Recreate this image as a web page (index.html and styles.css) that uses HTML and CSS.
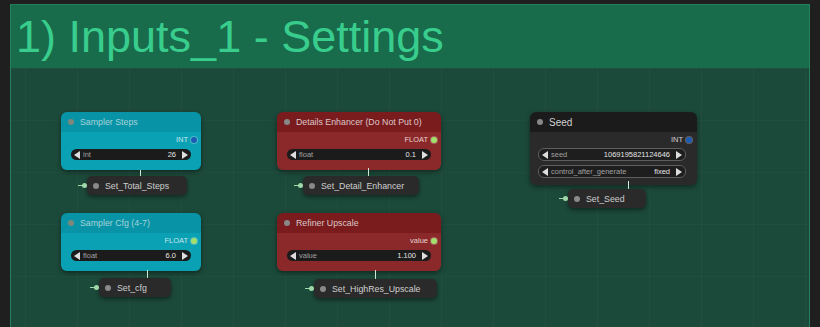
FILE: index.html
```html
<!DOCTYPE html>
<html lang="en">
<head>
  <meta charset="UTF-8" />
  <title>Inputs_1 - Settings</title>
  <link rel="stylesheet" href="styles.css">
</head>
<body>
  <div class="group">
    <div class="group-title">1) Inputs_1 - Settings</div>
    <div class="group-body">

      <!-- row 1 -->
      <div class="node node-teal" style="left:50px; top:44px; width:140px;">
        <div class="node-title"><span class="title-dot"></span>Sampler Steps</div>
        <div class="node-body">
          <div class="output">INT <span class="slot slot-int"></span></div>
          <div class="pill"><span class="arrow left"></span><span class="pill-label">int</span><span class="pill-value">26</span><span class="arrow right"></span></div>
        </div>
      </div>
      <div class="link" style="left:129px; top:102px; height:6px;"></div>
      <div class="set-node" style="left:76px; top:108px; width:94px;"><span class="set-dot"></span>Set_Total_Steps</div>

      <div class="node node-red" style="left:266px; top:44px; width:164px;">
        <div class="node-title"><span class="title-dot"></span>Details Enhancer (Do Not Put 0)</div>
        <div class="node-body">
          <div class="output">FLOAT <span class="slot slot-float"></span></div>
          <div class="pill"><span class="arrow left"></span><span class="pill-label">float</span><span class="pill-value">0.1</span><span class="arrow right"></span></div>
        </div>
      </div>
      <div class="link" style="left:357px; top:100px; height:8px;"></div>
      <div class="set-node" style="left:292px; top:108px; width:110px;"><span class="set-dot"></span>Set_Detail_Enhancer</div>

      <div class="node node-dark" style="left:519px; top:44px; width:167px;">
        <div class="node-title"><span class="title-dot"></span>Seed</div>
        <div class="node-body">
          <div class="output">INT <span class="slot slot-int"></span></div>
          <div class="pill pill-outline"><span class="arrow left"></span><span class="pill-label">seed</span><span class="pill-value">1069195821124646</span><span class="arrow right"></span></div>
          <div class="pill pill-outline"><span class="arrow left"></span><span class="pill-label">control_after_generate</span><span class="pill-value">fixed</span><span class="arrow right"></span></div>
        </div>
      </div>
      <div class="link" style="left:617px; top:113px; height:8px;"></div>
      <div class="set-node" style="left:557px; top:121px; width:72px;"><span class="set-dot"></span>Set_Seed</div>

      <!-- row 2 -->
      <div class="node node-teal" style="left:50px; top:145px; width:140px;">
        <div class="node-title"><span class="title-dot"></span>Sampler Cfg (4-7)</div>
        <div class="node-body">
          <div class="output">FLOAT <span class="slot slot-float"></span></div>
          <div class="pill"><span class="arrow left"></span><span class="pill-label">float</span><span class="pill-value">6.0</span><span class="arrow right"></span></div>
        </div>
      </div>
      <div class="link" style="left:136px; top:202px; height:8px;"></div>
      <div class="set-node" style="left:88px; top:210px; width:66px;"><span class="set-dot"></span>Set_cfg</div>

      <div class="node node-red" style="left:266px; top:145px; width:164px;">
        <div class="node-title"><span class="title-dot"></span>Refiner Upscale</div>
        <div class="node-body">
          <div class="output">value <span class="slot slot-float"></span></div>
          <div class="pill"><span class="arrow left"></span><span class="pill-label">value</span><span class="pill-value">1.100</span><span class="arrow right"></span></div>
        </div>
      </div>
      <div class="link" style="left:364px; top:202px; height:9px;"></div>
      <div class="set-node" style="left:303px; top:211px; width:117px;"><span class="set-dot"></span>Set_HighRes_Upscale</div>

    </div>
  </div>
</body>
</html>
```

FILE: styles.css
```css
body {
  margin: 0;
  background: #1f1f1f;
  font-family: "Liberation Sans", Arial, sans-serif;
  overflow: hidden;
}
.group {
  margin: 4px 0 0 10px;
  width: 798px;
  height: 323px;
  border: 1px solid #23805a;
  border-bottom: none;
  background: #1c4a3a;
}
.group-title {
  height: 63px;
  background: #186b4b;
  color: #38cd8d;
  font-size: 45px;
  line-height: 63px;
  padding-left: 5px;
  white-space: nowrap;
}
.group-body {
  position: relative;
  height: 260px;
  background-image:
    linear-gradient(to right, rgba(255,255,255,0.025) 1px, transparent 1px),
    linear-gradient(to bottom, rgba(255,255,255,0.02) 1px, transparent 1px);
  background-size: 52px 52px;
  background-position: 14px 0;
}

/* nodes */
.node {
  position: absolute;
  border-radius: 6px;
  box-shadow: 0 2px 5px rgba(0,0,0,0.45);
  overflow: hidden;
}
.node-title {
  height: 20px;
  display: flex;
  align-items: center;
  padding-left: 7px;
  font-size: 8.8px;
  white-space: nowrap;
}
.title-dot {
  width: 6px;
  height: 6px;
  border-radius: 50%;
  margin-right: 6px;
  background: #888;
}
.node-body {
  display: flex;
  flex-direction: column;
  padding: 1px 0 10px;
}
.output {
  height: 13px;
  display: flex;
  align-items: center;
  justify-content: flex-end;
  padding-right: 4px;
  font-size: 7.5px;
  gap: 3px;
}
.slot {
  width: 6px;
  height: 6px;
  border-radius: 50%;
  box-shadow: 0 0 0 1px rgba(255,255,255,0.25);
}
.slot-int { background: #1d5cb5; }
.slot-float { background: #a2e06c; }

.pill {
  height: 11px;
  margin: 3px 10px 0;
  border-radius: 6px;
  background: #1b1b1b;
  display: flex;
  align-items: center;
  padding: 0 3px;
  font-size: 7.5px;
  white-space: nowrap;
}
.pill-label {
  color: #a0a0a0;
  flex: 1;
  margin-left: 3px;
}
.pill-value {
  color: #e4e4e4;
  margin-right: 6px;
}
.arrow {
  width: 0;
  height: 0;
  border-top: 4px solid transparent;
  border-bottom: 4px solid transparent;
}
.arrow.left { border-right: 6px solid #dedede; }
.arrow.right { border-left: 6px solid #dedede; }

.pill-outline {
  background: #1e1e1e;
  border: 1px solid #5e5e5e;
  margin: 2px 11px 0 8px;
}
.pill-outline + .pill-outline {
  margin-top: 4px;
}

.node-teal .node-title { background: #0894a6; color: #a6d2d8; }
.node-teal .node-body { background: #0ba1b4; }
.node-teal .output { color: #c4e6eb; }
.node-teal .title-dot { background: #7d877a; }

.node-red .node-title { background: #7a1b1e; color: #dcc8c8; }
.node-red .node-body { background: #8b2829; }
.node-red .output { color: #e6d2d2; }

.node-dark .node-title { background: #1b1b1b; color: #d0d0d0; font-size: 10px; }
.node-dark .node-body { background: #2a2a2a; padding-bottom: 7px; }
.node-dark .output { color: #d0d0d0; padding-right: 5px; }

/* set nodes */
.set-node {
  position: absolute;
  height: 19px;
  border-radius: 5px;
  background: #2a2a2a;
  box-shadow: 0 2px 4px rgba(0,0,0,0.45);
  color: #cfcfcf;
  font-size: 8.8px;
  display: flex;
  align-items: center;
  padding-left: 6px;
  white-space: nowrap;
}
.set-dot {
  width: 6px;
  height: 6px;
  border-radius: 50%;
  background: #8a8a8a;
  margin-right: 6px;
}
.set-node::before {
  content: "";
  position: absolute;
  left: -9px;
  top: 9px;
  width: 6px;
  height: 1px;
  background: #9fd8a8;
}
.set-node::after {
  content: "";
  position: absolute;
  left: -5px;
  top: 7px;
  width: 5px;
  height: 5px;
  border-radius: 50%;
  background: #9fd8a8;
}
.link {
  position: absolute;
  width: 1px;
  background: #cfe8d8;
}
```
